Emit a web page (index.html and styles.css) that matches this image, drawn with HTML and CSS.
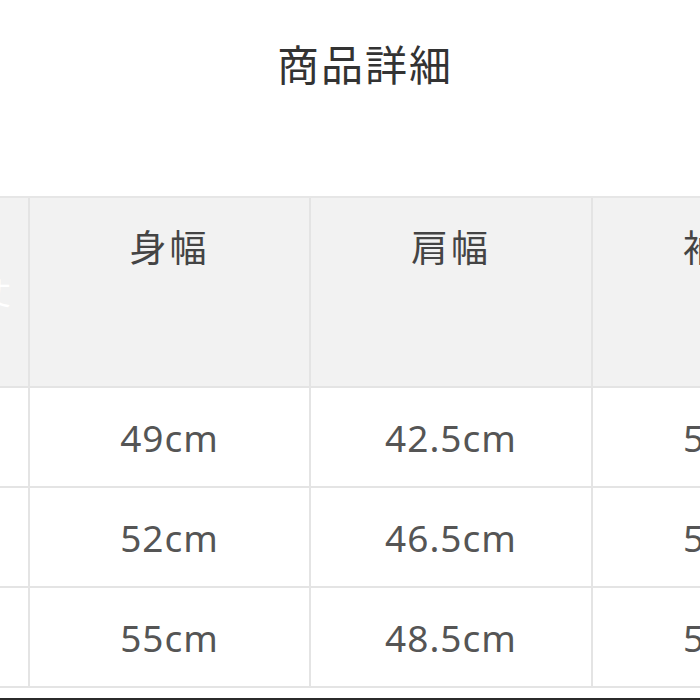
FILE: index.html
```html
<!DOCTYPE html>
<html lang="ja">
<head>
<meta charset="utf-8">
<title>商品詳細</title>
<link rel="stylesheet" href="styles.css">
</head>
<body>
<div class="page">
  <header class="title-block">
    <h1 class="title">商品詳細</h1>
  </header>
  <div class="table">
    <div class="cell head first"><span class="faint">丈</span></div>
    <div class="cell head">身幅</div>
    <div class="cell head">肩幅</div>
    <div class="cell head last">袖丈</div>

    <div class="cell first"></div>
    <div class="cell">49cm</div>
    <div class="cell">42.5cm</div>
    <div class="cell last">59cm</div>

    <div class="cell first"></div>
    <div class="cell">52cm</div>
    <div class="cell">46.5cm</div>
    <div class="cell last">59cm</div>

    <div class="cell first"></div>
    <div class="cell">55cm</div>
    <div class="cell">48.5cm</div>
    <div class="cell last">59cm</div>
  </div>
  <div class="spacer"></div>
  <div class="edge"></div>
</div>
</body>
</html>
```

FILE: styles.css
```css
* { box-sizing: border-box; }
html, body { margin: 0; padding: 0; background: #ffffff; }
body {
  font-family: "Noto Sans", "Noto Sans CJK JP", sans-serif;
  color: #444;
}
.page {
  width: 700px;
  height: 700px;
  overflow: hidden;
  display: flex;
  flex-direction: column;
}
.title-block {
  height: 196px;
  flex: none;
  padding: 42px 0 0 30px;
  text-align: center;
}
.title {
  margin: 0;
  font-family: "Noto Sans CJK JP", sans-serif;
  font-size: 42px;
  font-weight: 400;
  line-height: 1;
  letter-spacing: 2px;
  color: #333;
}
.table {
  flex: none;
  display: grid;
  grid-template-columns: 30px 281px 282px 282px;
  grid-template-rows: 190px 100px 100px 100px;
  border-top: 2px solid #e6e6e6;
  width: 875px;
}
.cell {
  border-right: 2px solid #e4e4e4;
  border-bottom: 2px solid #e4e4e4;
  background: #ffffff;
  display: flex;
  align-items: center;
  justify-content: center;
  font-size: 37px;
  letter-spacing: 1px;
  color: #555;
  white-space: nowrap;
  overflow: hidden;
}
.cell.head {
  background: #f2f2f2;
  align-items: flex-start;
  padding-top: 30px;
  font-family: "Noto Sans CJK JP", sans-serif;
  font-size: 37px;
  line-height: 1;
  letter-spacing: 3px;
  color: #444;
}
.cell.last {
  justify-content: flex-start;
  padding-left: 90px;
}
.cell.first {
  justify-content: flex-end;
}
.cell.head.first {
  padding-top: 78px;
}
.faint {
  color: #ffffff;
  font-size: 30px;
  margin-right: 14px;
}
.spacer { flex: none; height: 10px; }
.edge { flex: none; height: 3px; background: #2b2b2b; }
```
